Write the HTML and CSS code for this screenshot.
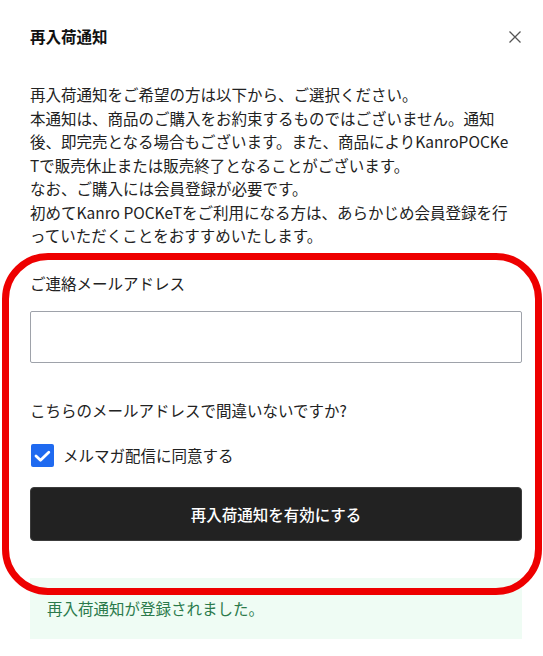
FILE: index.html
```html
<!DOCTYPE html>
<html lang="ja">
<head>
<meta charset="utf-8">
<title>再入荷通知</title>
<link rel="stylesheet" href="styles.css">
</head>
<body>
<div class="modal">
  <div class="header">
    <h2 class="title">再入荷通知</h2>
    <button class="close" aria-label="閉じる">
      <svg width="14" height="14" viewBox="0 0 14 14"><path d="M1.5 1.5 L12.5 12.5 M12.5 1.5 L1.5 12.5" stroke="#555" stroke-width="1.3" fill="none"/></svg>
    </button>
  </div>
  <p class="desc">再入荷通知をご希望の方は以下から、ご選択ください。<br>本通知は、商品のご購入をお約束するものではございません。通知<br>後、即完売となる場合もございます。また、商品によりKanroPOCKe<br>Tで販売休止または販売終了となることがございます。<br>なお、ご購入には会員登録が必要です。<br>初めてKanro POCKeTをご利用になる方は、あらかじめ会員登録を行<br>っていただくことをおすすめいたします。</p>
  <label class="field-label" for="mail">ご連絡メールアドレス</label>
  <input class="mail-input" id="mail" type="email">
  <p class="confirm">こちらのメールアドレスで間違いないですか?</p>
  <div class="agree">
    <span class="checkbox">
      <svg width="23" height="23" viewBox="0 0 23 23"><polyline points="5,12 9.5,16.3 17.8,8.2" stroke="#fff" stroke-width="2.8" fill="none" stroke-linecap="round" stroke-linejoin="round"/></svg>
    </span>
    <span class="agree-text">メルマガ配信に同意する</span>
  </div>
  <button class="submit">再入荷通知を有効にする</button>
  <div class="notice">再入荷通知が登録されました。</div>
</div>
<div class="highlight"></div>
</body>
</html>
```
FILE: styles.css
```css
html, body {
  margin: 0;
  padding: 0;
  background: #fff;
}
body {
  font-family: "Noto Sans CJK JP", "Noto Sans", sans-serif;
  color: #222;
  position: relative;
  width: 543px;
  height: 656px;
  overflow: hidden;
}
.modal {
  padding: 24px 21px 0 30px;
  display: flex;
  flex-direction: column;
  font-size: 15.5px;
  line-height: 23.5px;
}
.header {
  display: flex;
  justify-content: space-between;
  align-items: center;
  height: 24px;
}
.title {
  margin: 0;
  font-size: 15.5px;
  font-weight: 700;
  line-height: 24px;
  color: #111;
}
.close {
  border: 0;
  background: none;
  padding: 0;
  width: 14px;
  height: 14px;
  display: flex;
  margin-top: 1px;
}
.desc {
  margin: 35px 0 0;
  white-space: nowrap;
  color: #222;
}
.field-label {
  margin-top: 24px;
  display: block;
  color: #222;
}
.mail-input {
  margin-top: 16px;
  height: 52px;
  box-sizing: border-box;
  border: 1px solid #9ea2aa;
  border-radius: 2px;
  width: 100%;
  padding: 0 12px;
  font-size: 15.5px;
}
.confirm {
  margin: 36px 0 0;
}
.agree {
  margin-top: 21px;
  display: flex;
  align-items: center;
  gap: 9px;
  padding-left: 1px;
}
.checkbox {
  width: 23px;
  height: 23px;
  background: #1f6af0;
  border-radius: 2px;
  display: flex;
}
.agree-text {
  color: #222;
}
.submit {
  margin-top: 20px;
  height: 54px;
  width: 100%;
  background: #222;
  color: #fff;
  border: 1px solid #3c3c3c;
  border-radius: 4px;
  font-family: inherit;
  font-size: 15.5px;
  font-weight: 500;
}
.notice {
  margin-top: 37px;
  height: 61px;
  background: #effcf4;
  color: #2b7a4b;
  display: flex;
  align-items: center;
  padding-left: 17px;
}
.highlight {
  position: absolute;
  left: 2px;
  top: 253px;
  width: 540px;
  height: 342px;
  box-sizing: border-box;
  border: 7px solid #ee0000;
  border-radius: 46px;
  pointer-events: none;
}
```
